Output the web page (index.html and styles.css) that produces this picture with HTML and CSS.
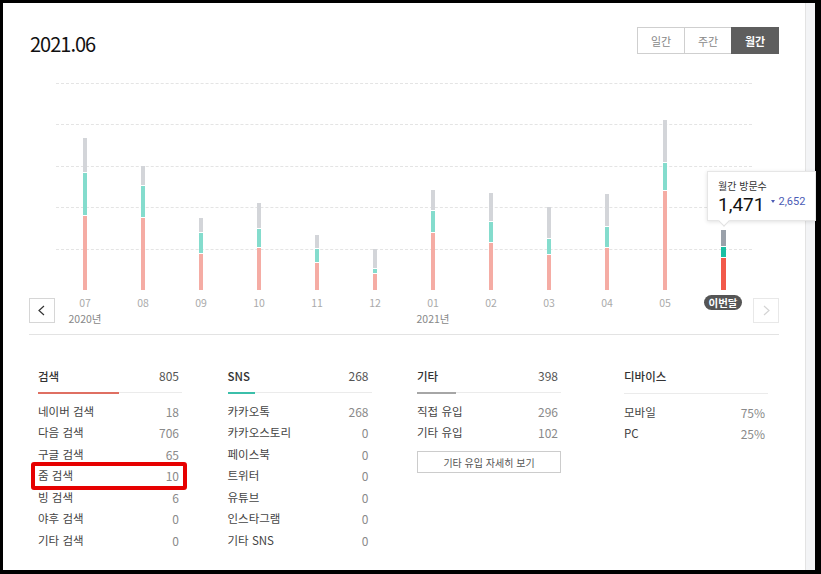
FILE: index.html
```html
<!DOCTYPE html>
<html lang="ko">
<head>
  <meta charset="UTF-8" />
  <meta name="viewport" content="width=device-width, initial-scale=1.0" />
  <title>방문 통계</title>
  <link rel="stylesheet" href="styles.css">
</head>
<body>
  <div class="screen">
    <div class="page">
      <div class="top">
        <h1 class="period">2021.06</h1>
        <div class="tabs">
          <button class="tab">일간</button>
          <button class="tab">주간</button>
          <button class="tab active">월간</button>
        </div>
      </div>

      <div class="plot">
        <div class="grid">
          <div></div><div></div><div></div><div></div><div></div>
        </div>
        <div class="bars">
          <div class="col"><div class="bar"><span class="seg etc" style="height:34px"></span><span class="seg sns" style="height:43px"></span><span class="seg search" style="height:75px"></span></div></div>
          <div class="col"><div class="bar"><span class="seg etc" style="height:19px"></span><span class="seg sns" style="height:32px"></span><span class="seg search" style="height:73px"></span></div></div>
          <div class="col"><div class="bar"><span class="seg etc" style="height:14px"></span><span class="seg sns" style="height:21px"></span><span class="seg search" style="height:37px"></span></div></div>
          <div class="col"><div class="bar"><span class="seg etc" style="height:25px"></span><span class="seg sns" style="height:19px"></span><span class="seg search" style="height:43px"></span></div></div>
          <div class="col"><div class="bar"><span class="seg etc" style="height:13px"></span><span class="seg sns" style="height:14px"></span><span class="seg search" style="height:28px"></span></div></div>
          <div class="col"><div class="bar"><span class="seg etc" style="height:19px"></span><span class="seg sns" style="height:5px"></span><span class="seg search" style="height:17px"></span></div></div>
          <div class="col"><div class="bar"><span class="seg etc" style="height:20px"></span><span class="seg sns" style="height:22px"></span><span class="seg search" style="height:58px"></span></div></div>
          <div class="col"><div class="bar"><span class="seg etc" style="height:28px"></span><span class="seg sns" style="height:21px"></span><span class="seg search" style="height:48px"></span></div></div>
          <div class="col"><div class="bar"><span class="seg etc" style="height:31px"></span><span class="seg sns" style="height:16px"></span><span class="seg search" style="height:36px"></span></div></div>
          <div class="col"><div class="bar"><span class="seg etc" style="height:32px"></span><span class="seg sns" style="height:21px"></span><span class="seg search" style="height:43px"></span></div></div>
          <div class="col"><div class="bar"><span class="seg etc" style="height:42px"></span><span class="seg sns" style="height:28px"></span><span class="seg search" style="height:100px"></span></div></div>
          <div class="col"><div class="bar current"><span class="seg etc" style="height:16px"></span><span class="seg sns" style="height:11px"></span><span class="seg search" style="height:33px"></span></div></div>
        </div>
        <div class="tip">
          <div class="tip-label">월간 방문수</div>
          <div class="tip-value">
            <strong>1,471</strong>
            <span class="tip-prev"><i class="down"></i>2,652</span>
          </div>
        </div>
      </div>

      <div class="axis">
        <button class="nav">
          <svg width="26" height="25" viewBox="0 0 26 25"><polyline points="15,8 10,12.5 15,17" fill="none" stroke="#333" stroke-width="1.2"/></svg>
        </button>
        <div class="labels">
          <div class="months">
            <span>07</span><span>08</span><span>09</span><span>10</span><span>11</span><span>12</span>
            <span>01</span><span>02</span><span>03</span><span>04</span><span>05</span>
            <span><em class="now">이번달</em></span>
          </div>
          <div class="years">
            <span class="year-a">2020년</span>
            <span class="year-b">2021년</span>
          </div>
        </div>
        <button class="nav off" disabled>
          <svg width="26" height="25" viewBox="0 0 26 25"><polyline points="11,8 16,12.5 11,17" fill="none" stroke="#d4d4d4" stroke-width="1.2"/></svg>
        </button>
      </div>

      <div class="stats">
        <section class="stat">
          <div class="stat-head"><span>검색</span><span class="num">805</span></div>
          <div class="rule"><i class="fill search" style="width:56%"></i></div>
          <ul class="rows">
            <li><span>네이버 검색</span><span class="num">18</span></li>
            <li><span>다음 검색</span><span class="num">706</span></li>
            <li><span>구글 검색</span><span class="num">65</span></li>
            <li class="marked"><span>줌 검색</span><span class="num">10</span></li>
            <li><span>빙 검색</span><span class="num">6</span></li>
            <li><span>야후 검색</span><span class="num">0</span></li>
            <li><span>기타 검색</span><span class="num">0</span></li>
          </ul>
        </section>

        <section class="stat">
          <div class="stat-head"><span>SNS</span><span class="num">268</span></div>
          <div class="rule"><i class="fill sns" style="width:19%"></i></div>
          <ul class="rows">
            <li><span>카카오톡</span><span class="num">268</span></li>
            <li><span>카카오스토리</span><span class="num">0</span></li>
            <li><span>페이스북</span><span class="num">0</span></li>
            <li><span>트위터</span><span class="num">0</span></li>
            <li><span>유튜브</span><span class="num">0</span></li>
            <li><span>인스타그램</span><span class="num">0</span></li>
            <li><span>기타 SNS</span><span class="num">0</span></li>
          </ul>
        </section>

        <section class="stat">
          <div class="stat-head"><span>기타</span><span class="num">398</span></div>
          <div class="rule"><i class="fill etc" style="width:27%"></i></div>
          <ul class="rows">
            <li><span>직접 유입</span><span class="num">296</span></li>
            <li><span>기타 유입</span><span class="num">102</span></li>
          </ul>
          <button class="more">기타 유입 자세히 보기</button>
        </section>

        <section class="stat device">
          <div class="stat-head"><span>디바이스</span></div>
          <div class="rule"></div>
          <ul class="rows">
            <li><span>모바일</span><span class="num">75%</span></li>
            <li><span>PC</span><span class="num">25%</span></li>
          </ul>
        </section>
      </div>
    </div>
    <div class="scrollbar"></div>
  </div>
</body>
</html>
```

FILE: styles.css
```css
body {
  margin: 0;
  background: #000;
  font-family: 'Noto Sans CJK KR', 'Noto Sans', sans-serif;
  color: #333;
}
.screen {
  display: flex;
  height: 567px;
  margin: 3px 6px 4px 3px;
  background: #fff;
}
.page {
  flex: 1;
  padding-left: 26px;
}
.scrollbar {
  width: 9px;
  border-left: 1px solid #e3e3e3;
  background: #f3f4f6;
}

/* header */
.top {
  width: 750px;
  margin-top: 24px;
  display: flex;
  justify-content: space-between;
  align-items: flex-end;
}
.period {
  margin: 0 0 0 1px;
  font-size: 20px;
  line-height: 20px;
  font-weight: 400;
  letter-spacing: -1px;
  color: #111;
}
.tabs {
  display: flex;
}
.tab {
  width: 48px;
  height: 27px;
  margin: 0;
  padding: 0;
  border: 1px solid #cfcfcf;
  background: #fff;
  font-family: inherit;
  font-size: 11px;
  color: #888;
}
.tab + .tab {
  margin-left: -1px;
}
.tab.active {
  background: #5e5e5e;
  border-color: #5e5e5e;
  color: #fff;
  font-weight: 700;
}

/* chart */
.plot {
  position: relative;
  width: 696px;
  height: 207px;
  margin: 29px 0 0 27px;
}
.grid {
  position: absolute;
  top: 0;
  left: 0;
  right: 0;
  bottom: 0;
}
.grid div {
  height: 41.4px;
  box-sizing: border-box;
  border-top: 1px dashed #e4e4e4;
}
.bars {
  position: relative;
  display: flex;
  height: 100%;
}
.col {
  width: 58px;
  display: flex;
  justify-content: center;
  align-items: flex-end;
}
.bar {
  width: 4px;
  display: flex;
  flex-direction: column;
}
.bar.current {
  width: 5px;
}
.seg {
  display: block;
  box-sizing: border-box;
}
.seg + .seg {
  border-top: 1px solid #fff;
}
.seg.etc { background: #d3d5d9; }
.seg.sns { background: #84dccd; }
.seg.search { background: #f5aca4; }
.current .seg.etc { background: #9aa1aa; }
.current .seg.sns { background: #1bbfa3; }
.current .seg.search { background: #f2594a; }

.tip {
  position: absolute;
  z-index: 2;
  left: 651px;
  top: 88px;
  width: 109px;
  height: 50px;
  box-sizing: border-box;
  padding: 6px 0 0 10px;
  background: #fff;
  border: 1px solid #e6e6e6;
  box-shadow: 0 1px 4px rgba(0,0,0,0.12);
}
.tip::after {
  content: '';
  position: absolute;
  left: 12px;
  bottom: -5px;
  width: 7px;
  height: 7px;
  background: #fff;
  border-right: 1px solid #e2e2e2;
  border-bottom: 1px solid #e2e2e2;
  transform: rotate(45deg);
}
.tip-label {
  font-size: 10px;
  line-height: 15px;
  color: #333;
}
.tip-value {
  display: flex;
  align-items: flex-start;
  margin-top: 1px;
}
.tip-value strong {
  font-family: Roboto, 'Noto Sans', sans-serif;
  font-size: 19px;
  line-height: 22px;
  font-weight: 400;
  color: #111;
}
.tip-prev {
  display: flex;
  align-items: center;
  margin: 1px 0 0 7px;
  font-family: Roboto, 'Noto Sans', sans-serif;
  font-size: 11px;
  line-height: 13px;
  color: #4b5bb5;
}
.down {
  width: 0;
  height: 0;
  margin-right: 3px;
  border-left: 2px solid transparent;
  border-right: 2px solid transparent;
  border-top: 3px solid #4b5bb5;
}

.axis {
  width: 750px;
  height: 44px;
  display: flex;
  justify-content: space-between;
  align-items: flex-start;
  border-bottom: 1px solid #e3e3e3;
}
.nav {
  width: 26px;
  height: 25px;
  margin-top: 8px;
  padding: 0;
  border: 1px solid #d6d6d6;
  background: #fff;
}
.nav svg {
  display: block;
  margin: -1px;
}
.nav.off {
  border-color: #e8e8e8;
}
.labels {
  width: 696px;
}
.months, .years {
  display: grid;
  grid-template-columns: repeat(12, 58px);
  text-align: center;
}
.months {
  padding-top: 5px;
  height: 16px;
  font-size: 10.5px;
  line-height: 16px;
  color: #aaa;
}
.now {
  display: inline-block;
  padding: 0 5px;
  height: 15px;
  border-radius: 8px;
  background: #555;
  color: #fff;
  font-style: normal;
  font-size: 10.5px;
  line-height: 15px;
  font-weight: 700;
}
.years {
  height: 16px;
  font-size: 10.5px;
  line-height: 16px;
  color: #888;
}
.year-b {
  grid-column: 7;
}

/* traffic sources */
.stats {
  display: flex;
  margin: 32px 0 0 9px;
}
.stat {
  width: 144px;
}
.stat + .stat {
  margin-left: 45.5px;
}
.stat.device {
  margin-left: 63px;
}
.stat-head {
  display: flex;
  justify-content: space-between;
  padding: 0 3px 8px 0;
  font-size: 11.5px;
  line-height: 18px;
  font-weight: 500;
  color: #333;
}
.stat-head .num {
  font-size: 12px;
  font-weight: 400;
  color: #555;
}
.rule {
  height: 1px;
  background: #ebebeb;
}
.fill {
  display: block;
  height: 2px;
  margin-top: -1px;
}
.fill.search { background: #df6f62; }
.fill.sns { background: #3bbfaa; }
.fill.etc { background: #a6a6a6; }
.rows {
  list-style: none;
  margin: 0;
  padding: 7.5px 0 0;
}
.rows li {
  position: relative;
  display: flex;
  justify-content: space-between;
  height: 21.5px;
  padding-right: 3px;
  font-size: 11.5px;
  line-height: 21.5px;
  color: #444;
}
.rows .num {
  font-size: 12px;
  font-weight: 400;
  color: #8a8a8a;
}
.rows li.marked::after {
  content: '';
  position: absolute;
  top: -3px;
  bottom: -3px;
  left: -7px;
  right: -5px;
  border: 4px solid #e60000;
  border-radius: 3px;
}
.more {
  width: 144px;
  height: 22px;
  margin-top: 7.5px;
  padding: 0;
  border: 1px solid #cccccc;
  background: #fff;
  font-family: inherit;
  font-size: 10px;
  color: #555;
}
```
